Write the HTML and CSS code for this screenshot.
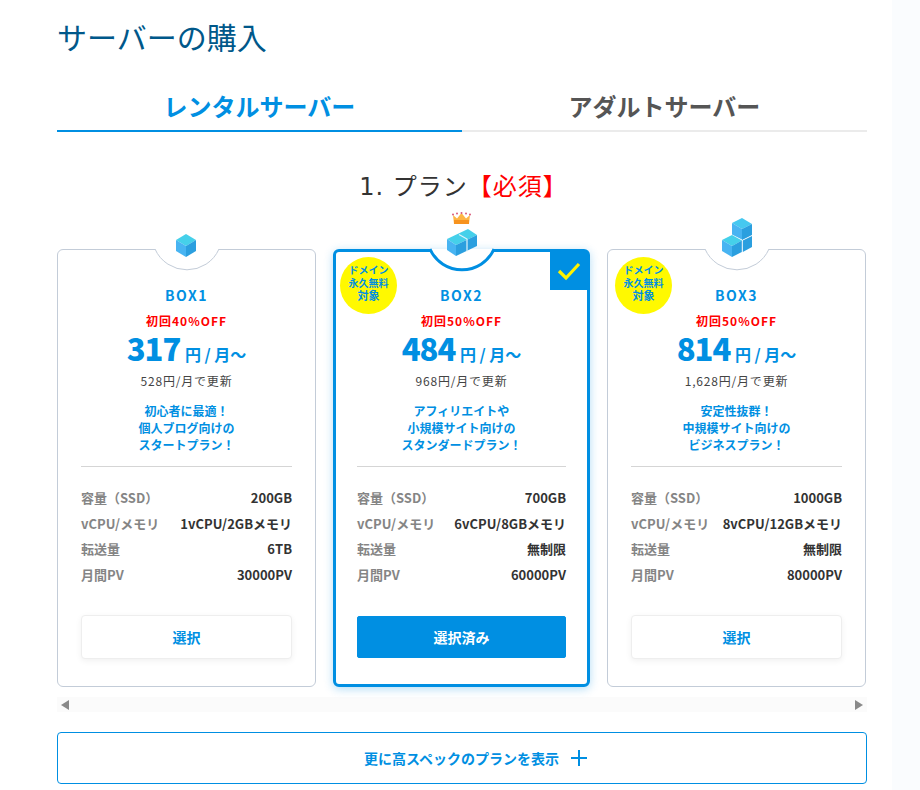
FILE: index.html
```html
<!DOCTYPE html>
<html lang="ja">
<head>
<meta charset="utf-8">
<title>サーバーの購入</title>
<link rel="stylesheet" href="styles.css">
</head>
<body>
<aside class="side-strip"></aside>
<main class="page">
  <h1 class="page-title">サーバーの購入</h1>
  <div class="tabs">
    <div class="tab tab-active">レンタルサーバー</div>
    <div class="tab">アダルトサーバー</div>
  </div>
  <h2 class="section-title"><span class="step">1. </span>プラン<span class="required">【必須】</span></h2>
  <div class="plans">
    <article class="plan">
      <svg class="notch" viewBox="0 0 68 24"><path d="M2 0A35 35 0 0 0 66 0Z" fill="#fff"/><path d="M2 0A35 35 0 0 0 66 0" fill="none" stroke="#c3ccd8" stroke-width="1"/></svg>
      <svg class="box-icon icon-1" viewBox="0 0 20 23"><path d="M10 0l10 6-10 6L0 6z" fill="#45d0ea"/><path d="M0 6l10 6v11L0 17z" fill="#48b4f2"/><path d="M20 6l-10 6v11l10-6z" fill="#2b9fdf"/></svg>
      <h3 class="plan-name">BOX1</h3>
      <p class="campaign">初回40%OFF</p>
      <p class="price"><b>317</b> 円 / 月〜</p>
      <p class="renew">528円/月で更新</p>
      <p class="catch">初心者に最適！<br>個人ブログ向けの<br>スタートプラン！</p>
      <dl class="specs">
        <div class="spec"><dt>容量（SSD）</dt><dd>200GB</dd></div>
        <div class="spec"><dt>vCPU/メモリ</dt><dd>1vCPU/2GBメモリ</dd></div>
        <div class="spec"><dt>転送量</dt><dd>6TB</dd></div>
        <div class="spec"><dt>月間PV</dt><dd>30000PV</dd></div>
      </dl>
      <button class="select">選択</button>
    </article>
    <article class="plan plan-selected">
      <svg class="notch" viewBox="0 0 68 24"><path d="M2 0A35 35 0 0 0 66 0Z" fill="#fff"/><path d="M2 0A35 35 0 0 0 66 0" fill="none" stroke="#008fe2" stroke-width="3"/></svg>
      <svg class="crown" viewBox="0 0 19 12"><path d="M1 3l4 3.500L9.500 1 14 6.500 18 3l-1 9H2z" fill="#fdb544"/><path d="M2 8h15v4H2z" fill="#f7931e"/><circle cx="1" cy="2.500" r="1" fill="#d9597a"/><circle cx="5" cy="1.500" r="1" fill="#d9597a"/><circle cx="9.500" cy="1" r="1" fill="#d9597a"/><circle cx="14" cy="1.500" r="1" fill="#d9597a"/><circle cx="18" cy="2.500" r="1" fill="#d9597a"/></svg>
      <svg class="box-icon icon-2" viewBox="0 0 30 27"><path d="M0 10L21 0l9 6-21 10z" fill="#45d0ea"/><path d="M0 10l9 6v11l-9-6z" fill="#48b4f2"/><path d="M30 6v11L9 27V16z" fill="#2b9fdf"/><path d="M12 5.500l8 4.500v12.500" fill="none" stroke="#dff3fb" stroke-width="1.200"/></svg>
      <span class="check-corner"><svg viewBox="0 0 24 20"><path d="M2 10l7 7L22 3" fill="none" stroke="#fff200" stroke-width="3.200"/></svg></span>
      <span class="badge">ドメイン<br>永久無料<br><em>対象</em></span>
      <h3 class="plan-name">BOX2</h3>
      <p class="campaign">初回50%OFF</p>
      <p class="price"><b>484</b> 円 / 月〜</p>
      <p class="renew">968円/月で更新</p>
      <p class="catch">アフィリエイトや<br>小規模サイト向けの<br>スタンダードプラン！</p>
      <dl class="specs">
        <div class="spec"><dt>容量（SSD）</dt><dd>700GB</dd></div>
        <div class="spec"><dt>vCPU/メモリ</dt><dd>6vCPU/8GBメモリ</dd></div>
        <div class="spec"><dt>転送量</dt><dd>無制限</dd></div>
        <div class="spec"><dt>月間PV</dt><dd>60000PV</dd></div>
      </dl>
      <button class="select select-on">選択済み</button>
    </article>
    <article class="plan">
      <svg class="notch" viewBox="0 0 68 24"><path d="M2 0A35 35 0 0 0 66 0Z" fill="#fff"/><path d="M2 0A35 35 0 0 0 66 0" fill="none" stroke="#c3ccd8" stroke-width="1"/></svg>
      <svg class="box-icon icon-3" viewBox="0 0 30 39"><path d="M10 5L20 0l10 6-10 5z" fill="#45c8f0"/><path d="M10 5l10 6v10.500l-10-5z" fill="#48b4f2"/><path d="M30 6v11l-10 5V11z" fill="#2b9fdf"/><path d="M0 22l10-5 10 5.500L10 28z" fill="#45d0ea"/><path d="M0 22l10 6v11L0 33z" fill="#48b4f2"/><path d="M10 28l9.800-5.500V34L10 39z" fill="#2b9fdf"/><path d="M20.800 22.500L30 18v11l-9.200 5z" fill="#2b9fdf"/></svg>
      <span class="badge">ドメイン<br>永久無料<br><em>対象</em></span>
      <h3 class="plan-name">BOX3</h3>
      <p class="campaign">初回50%OFF</p>
      <p class="price"><b>814</b> 円 / 月〜</p>
      <p class="renew">1,628円/月で更新</p>
      <p class="catch">安定性抜群！<br>中規模サイト向けの<br>ビジネスプラン！</p>
      <dl class="specs">
        <div class="spec"><dt>容量（SSD）</dt><dd>1000GB</dd></div>
        <div class="spec"><dt>vCPU/メモリ</dt><dd>8vCPU/12GBメモリ</dd></div>
        <div class="spec"><dt>転送量</dt><dd>無制限</dd></div>
        <div class="spec"><dt>月間PV</dt><dd>80000PV</dd></div>
      </dl>
      <button class="select">選択</button>
    </article>
  </div>
  <div class="scrollbar">
    <svg class="arrow" viewBox="0 0 8 10"><path d="M8 0v10L0 5z" fill="#8a8a8a"/></svg>
    <svg class="arrow" viewBox="0 0 8 10"><path d="M0 0v10l8-5z" fill="#8a8a8a"/></svg>
  </div>
  <button class="more">更に高スペックのプランを表示<svg class="plus" viewBox="0 0 16 16"><path d="M8 0v16M0 8h16" stroke="#008fe2" stroke-width="2" fill="none"/></svg></button>
</main>
</body>
</html>
```
FILE: styles.css
```css
* { box-sizing: border-box; }
html, body { margin: 0; padding: 0; height: 790px; overflow: hidden; background: #fff; }
body { font-family: "Noto Sans CJK JP", "Noto Sans", sans-serif; color: #333; position: relative; }
.side-strip { position: absolute; top: 0; right: 0; width: 28px; height: 790px; background: #fafcfe; }
.page { width: 810px; margin-left: 57px; position: relative; }
.page-title { margin: 0; padding-top: 14px; font-size: 30px; line-height: 44px; font-weight: 400; color: #00588a; }
.tabs { display: flex; margin-top: 17px; height: 57px; }
.tab { flex: 1; text-align: center; font-size: 24px; line-height: 62px; font-weight: 700; color: #555; height: 57px; border-bottom: 2px solid #ebebeb; }
.tab-active { color: #008fe2; border-bottom-color: #008fe2; }
.section-title { margin: 35px 0 0; padding-left: 3px; height: 36px; text-align: center; font-size: 24px; line-height: 36px; font-weight: 400; color: #333; letter-spacing: 1px; }
.step { font-family: "DejaVu Sans", sans-serif; }
.required { color: #f00; }
.plans { display: flex; gap: 17px; margin-top: 46px; }
.plan { position: relative; width: 259px; height: 438px; padding: 35px 23px 0; border: 1px solid #c3ccd8; border-radius: 6px; background: #fff; text-align: center; display: flex; flex-direction: column; }
.plan-selected { width: 257px; border: 3px solid #008fe2; padding: 33px 21px 0; box-shadow: 0 2px 10px rgba(0,143,226,.3); }
.notch { position: absolute; top: -1px; left: 50%; width: 68px; height: 24px; margin-left: -34px; overflow: visible; }
.plan-selected .notch { top: -3px; }
.box-icon { position: absolute; left: 50%; }
.icon-1 { top: -16px; width: 20px; height: 23px; margin-left: -10.5px; }
.icon-2 { top: -23px; width: 30px; height: 27px; margin-left: -15px; }
.icon-3 { top: -32px; width: 30px; height: 39px; margin-left: -15px; }
.crown { position: absolute; top: -40px; left: 50%; width: 19px; height: 12px; margin-left: -9.5px; }
.check-corner { position: absolute; top: 0; right: 0; width: 37px; height: 38px; background: #008fe2; display: flex; align-items: center; justify-content: center; }
.check-corner svg { width: 24px; height: 20px; }
.badge { position: absolute; top: 7px; left: 7px; width: 57px; height: 57px; border-radius: 50%; background: #fff900; color: #008fe2; font-size: 10px; line-height: 13px; font-weight: 700; padding-top: 6px; }
.plan-selected .badge { top: 5px; left: 4px; }
.badge em { font-style: normal; font-size: 11px; }
.plan-name { margin: 0; align-self: center; font-size: 14px; line-height: 20px; font-weight: 700; color: #008fe2; letter-spacing: 1.5px; }
.campaign { margin: 7px 0 0; font-size: 12px; line-height: 18px; font-weight: 700; color: #f00; letter-spacing: 1px; }
.price { margin: 0; font-size: 16px; line-height: 36px; font-weight: 700; color: #008fe2; }
.price b { display: inline-block; margin-right: 1px; font-size: 31px; line-height: 36px; letter-spacing: -1px; }
.renew { margin: 0; font-size: 12px; line-height: 18px; color: #444; letter-spacing: .8px; }
.catch { margin: 12px 0 0; font-size: 12px; line-height: 17px; font-weight: 700; color: #008fe2; border-bottom: 1px solid #d5d5d5; height: 65px; }
.specs { margin: 18px 0 0; }
.spec { display: flex; justify-content: space-between; height: 25.500px; line-height: 25px; font-size: 13px; }
.spec dt { color: #858585; font-weight: 700; }
.spec dd { margin: 0; color: #333; font-weight: 700; }
.select { margin-top: 28px; width: 100%; height: 44px; border: 1px solid #eee; border-radius: 4px; background: #fff; color: #008fe2; font: 700 14px "Noto Sans CJK JP", sans-serif; box-shadow: 0 2px 6px rgba(0,0,0,.06); }
.select-on { margin-top: 29px; height: 42px; background: #008fe2; color: #fff; border-color: #008fe2; border-radius: 2px; box-shadow: none; }
.scrollbar { display: flex; justify-content: space-between; align-items: center; margin-top: 10px; height: 15px; padding: 0 4px; background: #fbfbfb; }
.arrow { width: 8px; height: 10px; }
.more { display: flex; align-items: center; justify-content: center; gap: 12px; width: 100%; height: 52px; margin-top: 20px; padding-left: 33px; border: 1px solid #008fe2; border-radius: 4px; background: #fff; color: #008fe2; font: 700 14px "Noto Sans CJK JP", sans-serif; }
.plus { width: 16px; height: 16px; }
```
